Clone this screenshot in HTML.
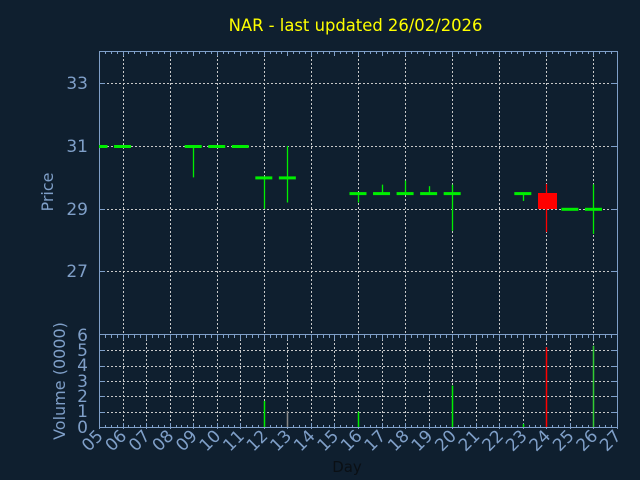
<!DOCTYPE html>
<html><head><meta charset="utf-8"><style>
html,body{margin:0;padding:0;background:#0f1f2f;}
svg{display:block}
text{font-family:"DejaVu Sans","Liberation Sans",sans-serif;}
</style></head><body>
<svg id="s" width="640" height="480" viewBox="0 0 640 480" xmlns="http://www.w3.org/2000/svg">
<rect width="640" height="480" fill="#0f1f2f"/>
<g id="grid"></g>
<text x="355.5" y="31" fill="#ffff00" font-size="16.4" text-anchor="middle">NAR - last updated 26/02/2026</text>
<g fill="#7f9fc8" font-size="17" text-anchor="end">
<text x="88" y="89">33</text><text x="88" y="152">31</text><text x="88" y="215">29</text><text x="88" y="277">27</text>
<text x="88" y="341">6</text><text x="88" y="356">5</text><text x="88" y="371">4</text><text x="88" y="387">3</text><text x="88" y="402">2</text><text x="88" y="417">1</text><text x="88" y="433">0</text>
</g>
<text transform="translate(53,192) rotate(-90)" fill="#7f9fc8" font-size="16" text-anchor="middle">Price</text>
<text transform="translate(65,381) rotate(-90)" fill="#7f9fc8" font-size="16" text-anchor="middle">Volume (0000)</text>
<text x="347" y="472" fill="#0a0f14" font-size="15" text-anchor="middle">Day</text>
<g id="xl" fill="#7f9fc8" font-size="17" text-anchor="end">
<text transform="translate(104,437) rotate(-45)">05</text>
<text transform="translate(127.5,437) rotate(-45)">06</text>
<text transform="translate(151,437) rotate(-45)">07</text>
<text transform="translate(174.6,437) rotate(-45)">08</text>
<text transform="translate(198.2,437) rotate(-45)">09</text>
<text transform="translate(221.7,437) rotate(-45)">10</text>
<text transform="translate(245.3,437) rotate(-45)">11</text>
<text transform="translate(268.8,437) rotate(-45)">12</text>
<text transform="translate(292.4,437) rotate(-45)">13</text>
<text transform="translate(316,437) rotate(-45)">14</text>
<text transform="translate(339.5,437) rotate(-45)">15</text>
<text transform="translate(363,437) rotate(-45)">16</text>
<text transform="translate(386.6,437) rotate(-45)">17</text>
<text transform="translate(410.2,437) rotate(-45)">18</text>
<text transform="translate(433.7,437) rotate(-45)">19</text>
<text transform="translate(457.3,437) rotate(-45)">20</text>
<text transform="translate(480.8,437) rotate(-45)">21</text>
<text transform="translate(504.4,437) rotate(-45)">22</text>
<text transform="translate(528,437) rotate(-45)">23</text>
<text transform="translate(551.5,437) rotate(-45)">24</text>
<text transform="translate(575,437) rotate(-45)">25</text>
<text transform="translate(598.6,437) rotate(-45)">26</text>
<text transform="translate(622,437) rotate(-45)">27</text>
</g>
<g id="data"></g>
</svg>
<script>
var NS="http://www.w3.org/2000/svg",g=document.getElementById('grid'),dg=document.getElementById('data');
function L(p,x1,y1,x2,y2,c,w,d){var e=document.createElementNS(NS,'line');e.setAttribute('x1',x1);e.setAttribute('y1',y1);e.setAttribute('x2',x2);e.setAttribute('y2',y2);e.setAttribute('stroke',c);e.setAttribute('stroke-width',w||1);if(d)e.setAttribute('stroke-dasharray',d);p.appendChild(e);}
function R(p,x,y,w,h,c){var e=document.createElementNS(NS,'rect');e.setAttribute('x',x);e.setAttribute('y',y);e.setAttribute('width',w);e.setAttribute('height',h);e.setAttribute('fill',c);p.appendChild(e);}
var X0=99,DX=23.545,gc="#c8c8c8",ax="#7f9fc8";
function X(d){return X0+d*DX;}
function Y(p){return 146+(31-p)*31.4;}
function V(v){return 427-v*15.33;}
[83,146,209,271].forEach(function(y){L(g,99,y+.5,617,y+.5,gc,1,"2,2");L(g,99,y+.5,105,y+.5,ax,1);L(g,611,y+.5,617,y+.5,ax,1);});
for(var d=1;d<22;d+=2){L(g,Math.round(X(d))+.5,51,Math.round(X(d))+.5,334,gc,1,"2,2");}
for(var v=1;v<=5;v++){var y=Math.round(V(v))+.5;L(g,99,y,617,y,gc,1,"2,2");L(g,99,y,105,y,ax,1);L(g,611,y,617,y,ax,1);}
for(var d=1;d<22;d++){L(g,Math.round(X(d))+.5,335,Math.round(X(d))+.5,427,gc,1,"2,2");}
for(var d=0;d<=22;d++){var x=Math.round(X(d))+.5;L(g,x,51,x,56,ax,1);L(g,x,429,x,423,ax,1);L(g,x,335,x,340,ax,1);
 for(var k=1;k<4&&d<22;k++){var xx=Math.round(X(d)+k*DX/4)+.5;L(g,xx,51,xx,54,ax,1);L(g,xx,428,xx,425,ax,1);L(g,xx,335,xx,338,ax,1);}}
L(g,99.5,51,99.5,428,ax,1);L(g,617.5,51,617.5,428,ax,1);L(g,99,51.5,618,51.5,ax,1);L(g,99,334.5,618,334.5,ax,1);L(g,99,427.5,618,427.5,ax,1);
var G="#00ee00";
function C(d,p,hi,lo){var x=X(d);if(hi!=null||lo!=null)L(dg,Math.round(x)+.5,Y(hi==null?p:hi),Math.round(x)+.5,Y(lo==null?p:lo),G,1.3);R(dg,Math.max(99,x-8.5),Y(p)-1,Math.min(17,x+8.5-Math.max(99,x-8.5)),3,G);}
C(0,31);C(1,31);C(4,31,null,30);C(5,31);C(6,31);C(7,30,null,29);C(8,30,31,29.2);
C(11,29.5,null,29.2);C(12,29.5,29.77);C(13,29.5,29.9);C(14,29.5,29.72);C(15,29.5,29.77,28.3);C(18,29.5,null,29.25);
C(20,29);C(21,29,29.78,28.2);
var x24=Math.round(X(19))+.5;L(dg,x24,184,x24,232,"#ff0000",1.3);R(dg,538,193,19,16,"#ff0000");
function VB(d,v,c){var x=Math.round(X(d))+.5;L(dg,x,V(v),x,427,c,1.5);}
VB(7,1.7,G);VB(8,1.05,"#888");VB(11,1,G);VB(15,2.7,G);VB(18,0.2,G);VB(19,5.2,"#ff0000");VB(21,5.3,"#33cc33");
</script>
</body></html>
